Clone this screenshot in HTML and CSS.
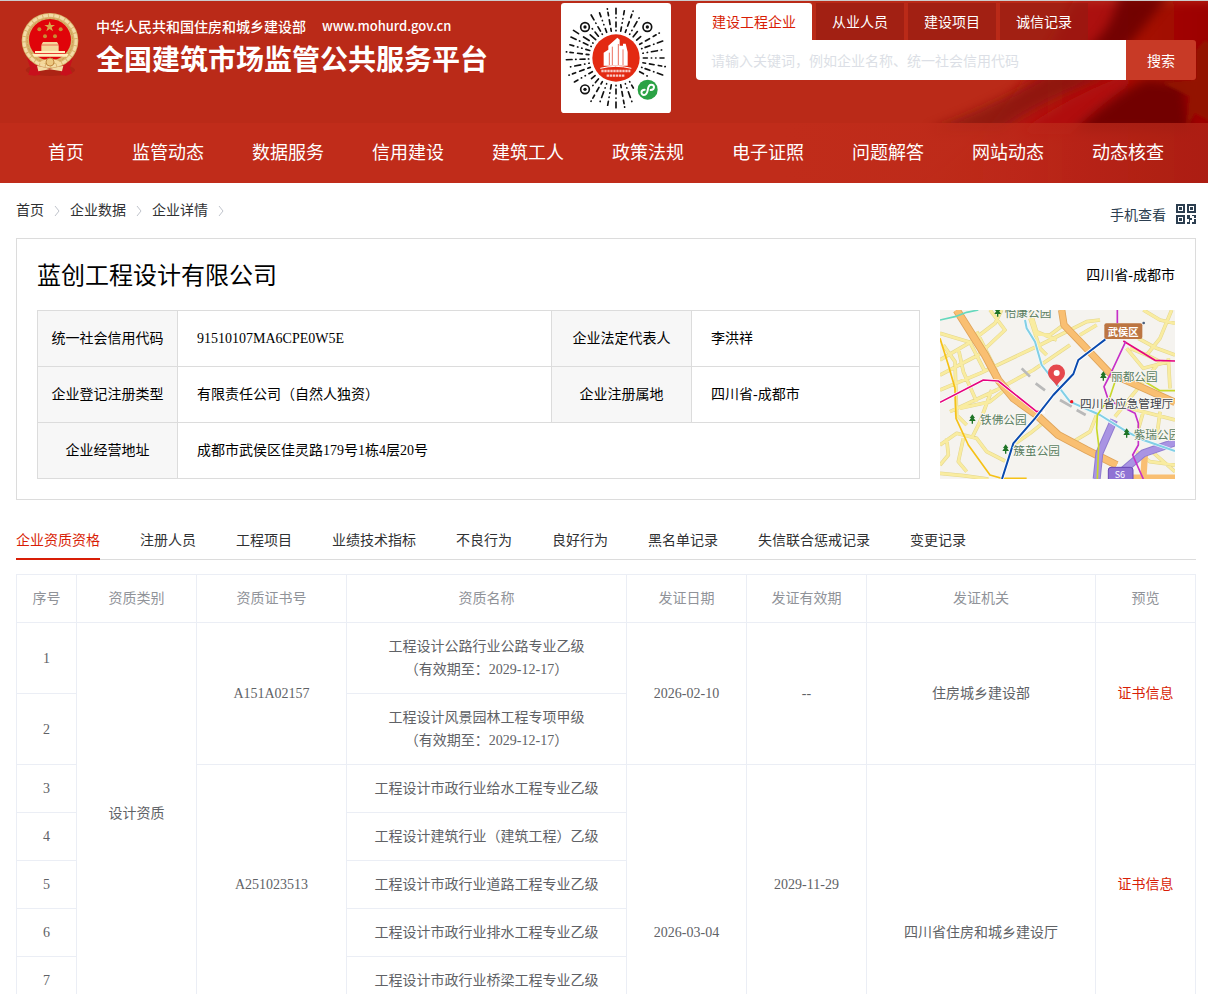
FILE: index.html
```html
<!DOCTYPE html>
<html lang="zh-CN">
<head>
<meta charset="utf-8">
<meta name="viewport" content="width=device-width, initial-scale=1">
<title>全国建筑市场监管公共服务平台</title>
<link rel="stylesheet" href="styles.css">
</head>
<body>
<header class="banner">
  <svg class="banner-art" viewBox="0 0 924 549" aria-hidden="true">
    <defs>
      <filter id="soft" x="-20%" y="-20%" width="140%" height="140%"><feGaussianBlur stdDeviation="16"/></filter>
      <filter id="soft2" x="-20%" y="-20%" width="140%" height="140%"><feGaussianBlur stdDeviation="5"/></filter>
      <linearGradient id="fade" x1="0" x2="1"><stop offset="0" stop-color="#b52212" stop-opacity="0"/><stop offset=".5" stop-color="#ae130b" stop-opacity=".9"/><stop offset="1" stop-color="#980000"/></linearGradient>
    </defs>
    <path d="M0 580 C200 480 330 330 520 0 H1000 V620Z" fill="url(#fade)" filter="url(#soft)"/>
    <path d="M80 390 C260 320 360 270 450 215 H640 C540 260 420 300 300 390Z" fill="#85130a" opacity=".75" filter="url(#soft)"/>
    <path d="M350 400 C440 330 560 265 660 230 H720 C630 290 560 350 510 400Z" fill="#b00d08" filter="url(#soft)"/>
    <path d="M520 390 C590 330 660 270 740 235 L850 250 L870 390Z" fill="#700301" opacity=".95" filter="url(#soft)"/>
    <path d="M560 140 C620 100 640 50 660 -20 H810 C760 40 710 110 660 160Z" fill="#6a0402" opacity=".85" filter="url(#soft)"/>
    <path d="M790 245 L868 285 L860 380 L885 335 L950 370 V130 L912 120 L888 150 V235Z" fill="#931603" opacity=".9" filter="url(#soft2)"/>
  </svg>
  <div class="masthead">
    <a class="brand" href="#">
      <svg class="emblem" viewBox="0 0 210 225" role="img" aria-label="国徽">
        <ellipse cx="106" cy="186" rx="74" ry="18" fill="#8c170c" opacity=".3"/>
        <path d="M36 150 L72 170 L76 200 L58 203 L40 200 L46 180Z M174 150 L138 170 L136 200 L153 203 L172 196 L164 180Z" fill="#c8101c"/>
        <ellipse cx="105" cy="98" rx="85" ry="83" fill="#d9b36c"/>
        <ellipse cx="105" cy="98" rx="78" ry="76" fill="none" stroke="#f3dba6" stroke-width="9" stroke-dasharray="14 3"/>
        <ellipse cx="105" cy="98" rx="68" ry="67" fill="none" stroke="#cf9f55" stroke-width="3" stroke-dasharray="8 4"/>
        <ellipse cx="105" cy="95" rx="63" ry="62" fill="#e0040a"/>
        <path d="M104 40 l4 11 12 0 -10 7 4 12 -10 -7 -10 7 4 -12 -10 -7 12 0Z" fill="#d9a94d"/>
        <g fill="#c98b35"><circle cx="73" cy="64" r="6"/><circle cx="137" cy="64" r="6"/><circle cx="90" cy="85" r="6"/><circle cx="120" cy="85" r="6"/></g>
        <path d="M84 102 h42 l5 8 h-52Z M79 112 h52 v17 h-52Z" fill="#f4d89b"/>
        <path d="M60 129 h90 v7 h-90Z M52 138 h108 l-4 8 h-99Z" fill="#fff0bd"/>
        <path d="M72 164 Q105 140 139 164 L130 170 Q105 152 82 170Z" fill="#f4d89b"/>
        <circle cx="105" cy="162" r="12" fill="#ecc981" stroke="#c28a42" stroke-width="3"/>
        <path d="M66 173 L104 182 L145 173 L141 190 L104 184 L70 190Z" fill="#f2dba4"/>
      </svg>
      <span class="brand-text">
        <span class="brand-sub"><span>中华人民共和国住房和城乡建设部</span><span class="brand-url">www.mohurd.gov.cn</span></span>
        <strong class="brand-title">全国建筑市场监管公共服务平台</strong>
      </span>
    </a>
    <svg class="mini-code" viewBox="18 9 330 330" role="img" aria-label="小程序码">
      <rect x="18" y="9" width="330" height="330" rx="10" fill="#fff"/>
      <defs>
        <g id="ra"><path d="M82 0H83M93 0H108M120 0H121M132 0H149"/></g>
        <g id="rb"><path d="M82 0H90M102 0H116M129 0H139M149 0H150"/></g>
        <g id="rc"><path d="M82 0H83M95 0H96M108 0H126M138 0H139"/></g>
        <g id="rd"><path d="M82 0H94M106 0H107M119 0H120M132 0H144"/></g>
      </defs>
      <g transform="translate(183 174)" stroke="#111" stroke-width="5" stroke-linecap="round" fill="none">
        <use href="#rd"/><use href="#rb" transform="rotate(10)"/><use href="#ra" transform="rotate(20)"/><path transform="rotate(30)" d="M82 0H95M107 0H108"/>
        <path transform="rotate(60)" d="M82 0H83M94 0H104"/><use href="#rc" transform="rotate(70)"/><use href="#rb" transform="rotate(80)"/>
        <use href="#ra" transform="rotate(90)"/><use href="#rd" transform="rotate(100)"/><use href="#rc" transform="rotate(110)"/><use href="#rb" transform="rotate(120)"/>
        <path transform="rotate(130)" d="M82 0H96M107 0H108"/><path transform="rotate(140)" d="M82 0H96"/>
        <use href="#rd" transform="rotate(150)"/><use href="#rb" transform="rotate(160)"/><use href="#rc" transform="rotate(169)"/><use href="#ra" transform="rotate(178)"/>
        <use href="#rb" transform="rotate(187)"/><use href="#rd" transform="rotate(196)"/><use href="#ra" transform="rotate(205)"/><path transform="rotate(213)" d="M82 0H83M96 0H116M134 0H152"/>
        <path transform="rotate(222)" d="M82 0H104"/><path transform="rotate(231)" d="M84 0H100M112 0H113"/><use href="#ra" transform="rotate(240)"/><use href="#rd" transform="rotate(250)"/>
        <use href="#rb" transform="rotate(260)"/><use href="#ra" transform="rotate(270)"/><use href="#rd" transform="rotate(280)"/><use href="#rb" transform="rotate(290)"/>
        <use href="#rc" transform="rotate(300)"/><path transform="rotate(309)" d="M82 0H102"/><path transform="rotate(319)" d="M82 0H98"/>
        <use href="#rb" transform="rotate(330)"/><use href="#ra" transform="rotate(340)"/><use href="#rc" transform="rotate(350)"/>
      </g>
      <g fill="#fff" stroke="#111" stroke-width="5"><circle cx="90" cy="81" r="13"/><circle cx="277" cy="81" r="13"/><circle cx="90" cy="268" r="13"/></g>
      <g fill="#111"><circle cx="90" cy="81" r="5"/><circle cx="277" cy="81" r="5"/><circle cx="90" cy="268" r="5"/></g>
      <circle cx="183" cy="174" r="71" fill="#e32a12"/>
      <path d="M146 197V158L160 149V137L187 113L194 119V137H204V131H212L218 156V197Z" fill="#fff"/>
      <path d="M163 158V195M172 140V195M190 132V195M204 148V195" stroke="#e32a12" stroke-width="2"/>
      <path d="M136 205Q182 193 229 205" stroke="#fff" stroke-width="3" fill="none"/>
      <path d="M139 213H226M155 227H210" stroke="#fff" stroke-width="7" stroke-dasharray="7 2" opacity=".75"/>
      <circle cx="278" cy="269" r="30" fill="#2ba245"/>
      <path d="M269 269C256 269 257 285 267 285C285 285 272 254 289 254C300 254 300 269 287 270" fill="none" stroke="#fff" stroke-width="6" stroke-linecap="round"/>
    </svg>
    <form class="search" action="#">
      <div class="search-tabs">
        <button type="button" class="search-tab is-active">建设工程企业</button>
        <button type="button" class="search-tab">从业人员</button>
        <button type="button" class="search-tab">建设项目</button>
        <button type="button" class="search-tab">诚信记录</button>
      </div>
      <div class="search-row">
        <input class="search-input" type="text" aria-label="关键词" placeholder="请输入关键词，例如企业名称、统一社会信用代码">
        <button class="search-button" type="submit">搜索</button>
      </div>
    </form>
  </div>
  <nav class="main-nav" aria-label="主导航">
    <a href="#">首页</a><a href="#">监管动态</a><a href="#">数据服务</a><a href="#">信用建设</a><a href="#">建筑工人</a><a href="#">政策法规</a><a href="#">电子证照</a><a href="#">问题解答</a><a href="#">网站动态</a><a href="#">动态核查</a>
  </nav>
</header>

<main class="page">
  <div class="page-top">
    <nav class="crumbs" aria-label="面包屑">
      <a href="#">首页</a><svg viewBox="0 0 6 12"><path d="M1 1l4 5-4 5"/></svg>
      <a href="#">企业数据</a><svg viewBox="0 0 6 12"><path d="M1 1l4 5-4 5"/></svg>
      <a href="#">企业详情</a><svg viewBox="0 0 6 12"><path d="M1 1l4 5-4 5"/></svg>
    </nav>
    <a class="phone-view" href="#"><span>手机查看</span>
      <svg viewBox="0 0 20 20" aria-hidden="true"><path fill="none" stroke="#2c3e50" stroke-width="2" d="M1 1h7v7H1zM12 1h7v7h-7zM1 12h7v7H1z"/><path fill="#2c3e50" d="M3 3h3v3H3zM14 3h3v3h-3zM3 14h3v3H3zM11 11h3v3h2v2h-2v4h-3v-2h2v-3h-2zM16 11h4v3h-2v-2h-2zM18 15h2v5h-4v-2h2z"/></svg>
    </a>
  </div>

  <section class="company">
    <div class="company-head"><h1>蓝创工程设计有限公司</h1><span>四川省-成都市</span></div>
    <div class="company-body">
      <table class="info">
        <colgroup><col class="info-label"><col class="info-wide"><col class="info-label"><col></colgroup>
        <tbody>
          <tr><th scope="row">统一社会信用代码</th><td>91510107MA6CPE0W5E</td><th scope="row">企业法定代表人</th><td>李洪祥</td></tr>
          <tr><th scope="row">企业登记注册类型</th><td>有限责任公司（自然人独资）</td><th scope="row">企业注册属地</th><td>四川省-成都市</td></tr>
          <tr><th scope="row">企业经营地址</th><td colspan="3">成都市武侯区佳灵路179号1栋4层20号</td></tr>
        </tbody>
      </table>
      <svg class="map" viewBox="30 15 705 507" role="img" aria-label="企业位置地图">
        <rect x="30" y="15" width="705" height="507" fill="#f5f3ef"/>
        <g fill="none" stroke-linejoin="round">
          <g stroke="#e3d68e" stroke-width="11">
            <path id="streets" d="M30 165L120 112L195 55L215 15M30 210L145 150L225 75L180 15M30 255L150 205L330 120L470 50L510 45M60 320L200 255L310 195L420 120M85 130L100 200L140 290M30 85L120 112L165 200M40 120L75 170L80 330L110 360M140 80L200 200M185 255L150 350L125 400M90 310L180 290L230 250M30 420L80 385L140 400L170 440L225 468M100 400L85 470L110 500M50 400L55 450L30 480M30 505L100 512L175 522M300 40L330 130L350 150M310 85L360 90L400 60M300 15L320 80L380 105M350 345L300 385L250 420M450 90L500 60M640 15L690 45L735 55M725 15L690 100L650 150M625 100L680 130L735 150M600 130L650 150L690 170M590 130L640 190L715 170M690 170L640 230L555 335M715 160L720 250M600 310L735 345M640 320L620 390M690 320L680 400M500 330L480 380L430 410M620 440L660 470L735 480M655 430L735 500"/>
          </g>
          <use href="#streets" stroke="#f9eca0" stroke-width="8"/>
          <path d="M80 15L165 150L205 225L250 280L320 330L385 390L470 435L560 480" stroke="#dfa45b" stroke-width="24"/>
          <path d="M80 15L165 150L205 225L250 280L320 330L385 390L470 435L560 480M645 440L640 522M735 518H600" stroke="#f9bf72" stroke-width="19"/>
          <path d="M395 15L402 60L455 115L540 205L630 245L735 292" stroke="#dfa45b" stroke-width="22"/>
          <path d="M395 15L402 60L455 115L540 205L630 245L735 292" stroke="#f9bf72" stroke-width="17"/>
          <path d="M500 522L508 445L552 345M570 505L640 445L735 412" stroke="#8f7bd0" stroke-width="24"/>
          <path d="M500 522L508 445L552 345M570 505L640 445L735 412" stroke="#a994e3" stroke-width="18"/>
          <path d="M275 190L300 215M317 235L345 256M390 285L425 305M440 315L467 330" stroke="#b9b9b9" stroke-width="8"/>
          <path d="M30 45L75 35L110 22L145 15" stroke="#65d8bd" stroke-width="5"/>
          <path d="M30 100L55 180L75 250L78 340L115 420L180 510L215 520H290" stroke="#f5c117" stroke-width="5"/>
          <path d="M30 292L160 225L205 228L320 320L345 322" stroke="#fff" stroke-width="9"/>
          <path d="M30 292L160 225L205 228L320 320L338 318M580 108L675 166L735 168" stroke="#e5047f" stroke-width="5"/>
          <path d="M285 45L290 70L315 110L335 180L370 225L420 290L510 330L590 380L640 405L735 438" stroke="#eefaff" stroke-width="10"/>
          <path d="M285 45L290 70L315 110L335 180L370 225L420 290L510 330L590 380L640 405L735 438" stroke="#82cfe5" stroke-width="6"/>
          <path d="M562 15V55M587 110L540 210L522 245L535 285L615 325L625 355V420L608 450L640 522" stroke="#c62fc8" stroke-width="5"/>
          <path d="M735 257H690L645 230M555 230L540 275L502 330L500 370L506 420L502 522" stroke="#c8d82b" stroke-width="5"/>
          <path d="M526 103L500 123L445 165L430 207L370 270L315 340L250 415L216 522" stroke="#fff" stroke-width="11"/>
          <path d="M526 103L500 123L445 165L430 207L370 270L315 340L250 415L216 522" stroke="#0a4aae" stroke-width="6"/>
        </g>
        <defs><path id="tree" fill="#1f7426" d="M0-14L8-3H4L10 6H2V14H-2V6H-10L-4-3H-8Z"/></defs>
        <use href="#tree" x="203" y="21"/><use href="#tree" x="520" y="213"/><use href="#tree" x="127" y="342"/><use href="#tree" x="227" y="432"/><use href="#tree" x="590" y="384"/>
        <g class="map-park"><text x="224" y="36">怡康公园</text><text x="543" y="229">丽都公园</text><text x="150" y="358">铁佛公园</text><text x="250" y="449">簇茧公园</text><text x="611" y="401">紫瑞公园</text></g>
        <circle cx="425" cy="290" r="5" fill="#f01422"/><circle cx="641" cy="54" r="4" fill="#4a5f7d"/>
        <text class="map-place" x="450" y="308">四川省应急管理厅</text>
        <rect x="523" y="55" width="114" height="47" rx="6" fill="#bc7542"/>
        <text class="map-district" x="533" y="92">武侯区</text>
        <rect x="535" y="487" width="74" height="45" rx="8" fill="#8f72d4" stroke="#6848b5" stroke-width="3"/>
        <text class="map-road" x="554" y="519">S6</text>
        <path d="M380 243C370 226 354 220 354 204A25 25 0 0 1 405 204C405 220 390 226 380 243Z" fill="#e5484d"/><circle cx="380" cy="204" r="9" fill="#fff"/>
      </svg>
    </div>
  </section>

  <nav class="detail-tabs" aria-label="企业信息">
    <a class="is-active" href="#">企业资质资格</a><a href="#">注册人员</a><a href="#">工程项目</a><a href="#">业绩技术指标</a><a href="#">不良行为</a><a href="#">良好行为</a><a href="#">黑名单记录</a><a href="#">失信联合惩戒记录</a><a href="#">变更记录</a>
  </nav>

  <table class="certs">
    <colgroup><col class="w-no"><col class="w-mid"><col class="w-cert"><col class="w-name"><col class="w-mid"><col class="w-mid"><col><col class="w-view"></colgroup>
    <thead><tr><th>序号</th><th>资质类别</th><th>资质证书号</th><th>资质名称</th><th>发证日期</th><th>发证有效期</th><th>发证机关</th><th>预览</th></tr></thead>
    <tbody>
      <tr><td>1</td><td rowspan="7">设计资质</td><td rowspan="2">A151A02157</td><td>工程设计公路行业公路专业乙级<br>（有效期至：2029-12-17）</td><td rowspan="2">2026-02-10</td><td rowspan="2">--</td><td rowspan="2">住房城乡建设部</td><td rowspan="2"><a href="#">证书信息</a></td></tr>
      <tr><td>2</td><td>工程设计风景园林工程专项甲级<br>（有效期至：2029-12-17）</td></tr>
      <tr><td>3</td><td rowspan="5">A251023513</td><td>工程设计市政行业给水工程专业乙级</td><td rowspan="7">2026-03-04</td><td rowspan="5">2029-11-29</td><td rowspan="7">四川省住房和城乡建设厅</td><td rowspan="5"><a href="#">证书信息</a></td></tr>
      <tr><td>4</td><td>工程设计建筑行业（建筑工程）乙级</td></tr>
      <tr><td>5</td><td>工程设计市政行业道路工程专业乙级</td></tr>
      <tr><td>6</td><td>工程设计市政行业排水工程专业乙级</td></tr>
      <tr><td>7</td><td>工程设计市政行业桥梁工程专业乙级</td></tr>
      <tr class="blank"><td></td><td></td><td></td><td></td><td></td><td></td></tr>
      <tr class="blank"><td></td><td></td><td></td><td></td><td></td><td></td></tr>
    </tbody>
  </table>
</main>
</body>
</html>
```

FILE: styles.css
```css
* { box-sizing: border-box; }
html { scrollbar-width: none; }
body {
  margin: 0;
  background: #fff;
  color: #000;
  font: 14px/20px "Liberation Serif", "Noto Sans CJK SC", sans-serif;
}
a { color: inherit; text-decoration: none; }
button, input { font: inherit; border: 0; }

/* Banner */
.banner {
  position: relative;
  overflow: hidden;
  border-top: 1px solid #ccc;
  background: #ba2a18;
  color: #fff;
}
.banner-art { position: absolute; top: 0; right: 0; width: 308px; height: 183px; }
.masthead {
  position: relative;
  display: flex;
  align-items: flex-start;
  height: 122px;
  padding: 2px 12px 0 15px;
}
.brand { display: flex; align-items: flex-start; flex: 1; padding-top: 5px; }
.emblem { width: 70px; height: 75px; flex: none; }
.brand-text {
  display: flex;
  flex-direction: column;
  padding: 8px 0 0 11px;
  font-family: "Noto Sans CJK SC", sans-serif;
  white-space: nowrap;
}
.brand-sub { display: flex; gap: 16px; font-size: 14px; line-height: 20px; font-weight: 500; }
.brand-url { font-size: 13px; }
.brand-title { font-size: 28px; line-height: 44px; font-weight: 700; }
.mini-code { width: 110px; height: 110px; margin-right: 25px; flex: none; }
.search { width: 500px; flex: none; }
.search-tabs { display: flex; gap: 4px; }
.search-tab {
  height: 37px;
  padding: 2px 16px 0;
  background: rgba(147, 26, 17, .6);
  color: #fff;
}
.search-tab.is-active { background: #fff; color: #d81e06; border-radius: 3px 3px 0 0; }
.search-row { display: flex; height: 40px; }
.search-input {
  flex: 1;
  min-width: 0;
  padding: 3px 15px 0;
  background: #fff;
  border-radius: 0 0 0 4px;
}
.search-input::placeholder { color: #dcdfe6; opacity: 1; }
.search-button { width: 70px; padding: 3px 0 0; background: #c83a26; color: #fff; border-radius: 0 3px 3px 0; }
.main-nav {
  position: relative;
  display: flex;
  height: 60px;
  padding: 0 24px;
  background: linear-gradient(90deg, #c02c1a 65%, rgba(190, 42, 26, .75) 85%, rgba(175, 34, 22, .85));
  font-size: 18px;
  line-height: 60px;
  white-space: nowrap;
}
.main-nav a { padding: 0 24px; }

/* Breadcrumb row */
.page { padding: 0 12px 20px 16px; }
.page-top { display: flex; justify-content: space-between; height: 55px; padding-top: 17px; color: #303133; }
.crumbs { display: flex; align-items: center; gap: 10px; height: 22px; }
.crumbs svg { width: 6px; height: 12px; fill: none; stroke: #c0c4cc; }
.phone-view { display: flex; align-items: center; gap: 10px; height: 28px; color: #2c3e50; }
.phone-view span { padding-top: 4px; }
.phone-view svg { width: 20px; height: 20px; }

/* Company card */
.company { padding: 20px; border: 1px solid #dcdcdc; }
.company-head { display: flex; align-items: center; justify-content: space-between; height: 34px; margin-bottom: 17px; }
.company-head h1 { margin: 0; font-size: 24px; line-height: 32px; font-weight: 400; }
.company-body { display: flex; gap: 20px; }
.info { flex: 1; height: 169px; border-collapse: collapse; table-layout: fixed; }
.info th, .info td { height: 56px; padding: 1px 19px 0; border: 1px solid #dcdcdc; }
.info th { padding: 1px 0 0; background: #f7f7f7; font-weight: 400; text-align: center; }
.info-label { width: 140px; }
.info-wide { width: 374px; }
.map { width: 235px; height: 169px; flex: none; }
.map text { font-family: "Noto Sans CJK SC", sans-serif; }
.map-park { font-size: 35px; fill: #5b7e62; }
.map-place { font-size: 35px; fill: #40424a; }
.map-district { font-size: 31px; font-weight: 700; fill: #fff; }
.map-road { font-size: 27px; fill: #fff; }
.map-park, .map-place { paint-order: stroke; stroke: #f9f8f4; stroke-width: 5px; }

/* Detail tabs */
.detail-tabs { display: flex; gap: 40px; margin-top: 20px; border-bottom: 1px solid #dcdcdc; color: #303133; white-space: nowrap; }
.detail-tabs a { height: 40px; margin-bottom: -1px; line-height: 42px; }
.detail-tabs .is-active { border-bottom: 2px solid #d81e06; color: #d81e06; }

/* Certificates */
.certs {
  width: 100%;
  margin-top: 14px;
  border-collapse: collapse;
  table-layout: fixed;
  color: #606266;
  line-height: 23px;
  text-align: center;
}
.certs th, .certs td { padding: 12px 0; border: 1px solid #ebeef5; }
.certs th { color: #909399; font-weight: 400; }
.certs a { color: #d81e06; }
.certs .blank td { height: 48px; }
.w-no { width: 60px; }
.w-mid { width: 120px; }
.w-cert { width: 150px; }
.w-name { width: 280px; }
.w-view { width: 100px; }
```
